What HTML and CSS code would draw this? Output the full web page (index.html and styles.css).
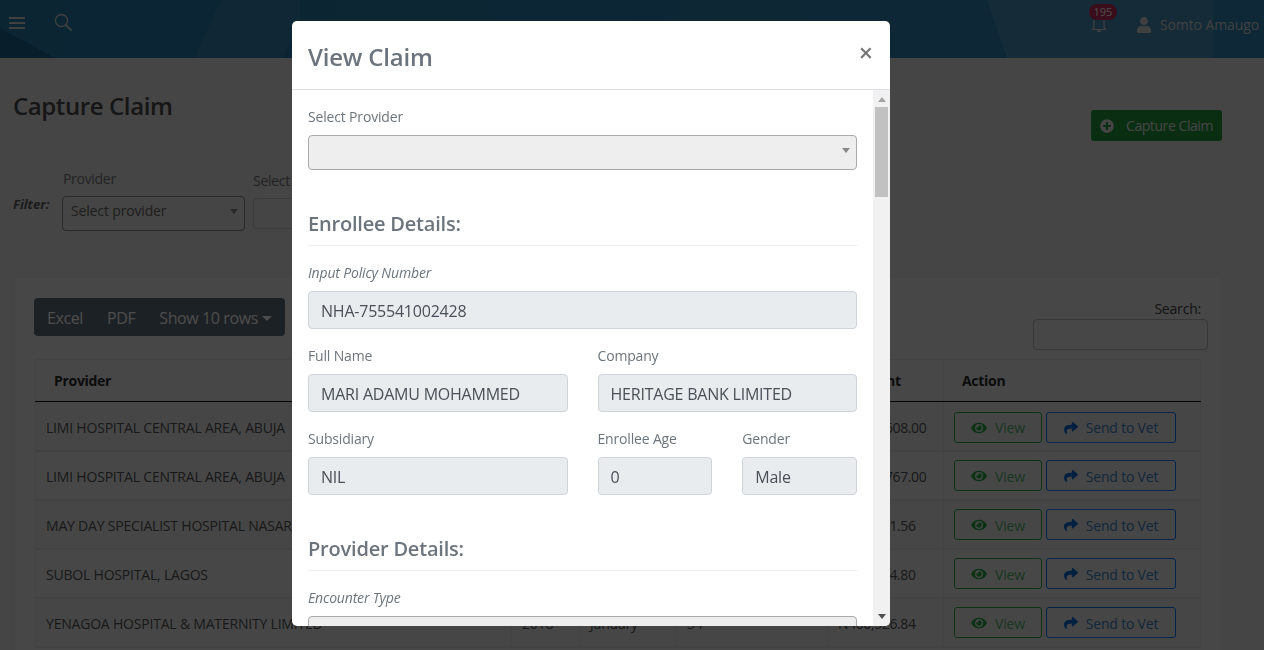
FILE: index.html
```html
<!DOCTYPE html>
<html>
<head>
  <title>Capture Claim</title>
  <link rel="stylesheet" href="styles.css">
</head>
<body>
  <svg class="sprites" aria-hidden="true">
    <symbol id="i-eye" viewBox="0 0 576 512"><path d="M572.52 241.4C518.29 135.59 410.93 64 288 64S57.68 135.64 3.48 241.41a32.35 32.35 0 0 0 0 29.19C57.71 376.41 165.07 448 288 448s230.32-71.64 284.52-177.41a32.35 32.35 0 0 0 0-29.19zM288 400a144 144 0 1 1 144-144 143.93 143.93 0 0 1-144 144zm0-240a95.31 95.31 0 0 0-25.31 3.79 47.85 47.85 0 0 1-66.9 66.9A95.78 95.78 0 1 0 288 160z"/></symbol>
    <symbol id="i-share" viewBox="0 0 512 512"><path d="M503.691 189.836L327.687 37.851C312.281 24.546 288 35.347 288 56.015v80.053C127.371 137.907 0 170.1 0 322.326c0 61.441 39.581 122.309 83.333 154.132 13.653 9.931 33.111-2.533 28.077-18.631C66.066 312.814 132.917 274.316 288 272.085V360c0 20.7 24.3 31.453 39.687 18.164l176.004-152c11.071-9.562 11.086-26.753 0-36.328z"/></symbol>
  </svg>

  <header class="topbar">
    <svg class="menu-icon" width="16" height="12" viewBox="0 0 16 12"><path d="M0 1h16M0 6h16M0 11h16" stroke="currentColor" stroke-width="2"/></svg>
    <svg class="search-icon" width="17" height="17" viewBox="0 0 17 17" fill="none" stroke="currentColor"><circle cx="6.500" cy="6.500" r="6" stroke-width="1.300"/><path d="M10.800 10.800L16.500 16.500" stroke-width="1.800"/></svg>
    <div class="topbar-right">
      <div class="bell">
        <svg width="16" height="17" viewBox="0 0 16 17" fill="none" stroke="currentColor" stroke-width="1.200"><path d="M3 4v6.500c0 1.500-1 2.500-2 3h14c-1-.5-2-1.500-2-3V4"/><path d="M6.500 15h3" stroke-width="2"/></svg>
        <span class="badge">195</span>
      </div>
      <svg class="user-icon" width="14" height="16" viewBox="0 0 448 512" fill="currentColor"><path d="M224 256c70.7 0 128-57.3 128-128S294.7 0 224 0 96 57.3 96 128s57.3 128 128 128zm89.6 32h-16.7c-22.2 10.200-46.9 16-72.9 16s-50.6-5.800-72.9-16h-16.7C60.2 288 0 348.2 0 422.4V464c0 26.500 21.500 48 48 48h352c26.500 0 48-21.500 48-48v-41.6c0-74.2-60.2-134.4-134.4-134.4z"/></svg>
      <span class="user-name">Somto Amaugo</span>
    </div>
  </header>

  <main class="page">
    <div class="page-head">
      <h1>Capture Claim</h1>
      <button class="btn-capture" type="button">
        <svg width="14" height="14" viewBox="0 0 512 512" fill="currentColor"><path d="M256 8C119 8 8 119 8 256s111 248 248 248 248-111 248-248S393 8 256 8zm144 276c0 6.600-5.400 12-12 12h-92v92c0 6.600-5.400 12-12 12h-56c-6.600 0-12-5.400-12-12v-92h-92c-6.600 0-12-5.400-12-12v-56c0-6.600 5.400-12 12-12h92v-92c0-6.600 5.400-12 12-12h56c6.600 0 12 5.400 12 12v92h92c6.600 0 12 5.400 12 12v56z"/></svg>
        Capture Claim
      </button>
    </div>

    <div class="filters">
      <span class="filter-title">Filter:</span>
      <div class="filter-group">
        <label>Provider</label>
        <div class="filter-select">Select provider<i class="caret"></i></div>
      </div>
      <div class="filter-group filter-second">
        <label>Select Year</label>
        <input class="filter-input" type="text">
      </div>
    </div>

    <section class="card">
      <div class="card-tools">
        <div class="export-btns">
          <span>Excel</span>
          <span>PDF</span>
          <span>Show 10 rows<i class="caret-up"></i></span>
        </div>
        <div class="table-search">
          <label>Search:</label>
          <input type="text">
        </div>
      </div>

      <table class="claims">
        <colgroup>
          <col class="c-provider"><col class="c-year"><col class="c-month"><col class="c-count"><col class="c-amount"><col class="c-action">
        </colgroup>
        <thead>
          <tr><th>Provider</th><th>Year</th><th>Month</th><th>Enrollees</th><th>Amount</th><th>Action</th></tr>
        </thead>
        <tbody>
          <tr>
            <td>LIMI HOSPITAL CENTRAL AREA, ABUJA</td><td>2018</td><td>January</td><td>12</td><td class="amt">N1,250,608.00</td>
            <td class="actions"><button class="btn-view"><svg width="16" height="14"><use href="#i-eye"/></svg>View</button><button class="btn-send"><svg width="14" height="14"><use href="#i-share"/></svg>Send to Vet</button></td>
          </tr>
          <tr>
            <td>LIMI HOSPITAL CENTRAL AREA, ABUJA</td><td>2018</td><td>January</td><td>8</td><td class="amt">N1,180,767.00</td>
            <td class="actions"><button class="btn-view"><svg width="16" height="14"><use href="#i-eye"/></svg>View</button><button class="btn-send"><svg width="14" height="14"><use href="#i-share"/></svg>Send to Vet</button></td>
          </tr>
          <tr>
            <td>MAY DAY SPECIALIST HOSPITAL NASARAWA</td><td>2018</td><td>January</td><td>21</td><td class="amt">N198,341.56</td>
            <td class="actions"><button class="btn-view"><svg width="16" height="14"><use href="#i-eye"/></svg>View</button><button class="btn-send"><svg width="14" height="14"><use href="#i-share"/></svg>Send to Vet</button></td>
          </tr>
          <tr>
            <td>SUBOL HOSPITAL, LAGOS</td><td>2018</td><td>January</td><td>17</td><td class="amt">N276,214.80</td>
            <td class="actions"><button class="btn-view"><svg width="16" height="14"><use href="#i-eye"/></svg>View</button><button class="btn-send"><svg width="14" height="14"><use href="#i-share"/></svg>Send to Vet</button></td>
          </tr>
          <tr>
            <td>YENAGOA HOSPITAL &amp; MATERNITY LIMITED</td><td>2018</td><td>January</td><td>34</td><td class="amt">N400,526.84</td>
            <td class="actions"><button class="btn-view"><svg width="16" height="14"><use href="#i-eye"/></svg>View</button><button class="btn-send"><svg width="14" height="14"><use href="#i-share"/></svg>Send to Vet</button></td>
          </tr>
        </tbody>
      </table>
    </section>
  </main>

  <div class="backdrop">
    <div class="modal">
      <div class="modal-head">
        <h2>View Claim</h2>
        <span class="modal-close">&times;</span>
      </div>
      <div class="modal-main">
        <div class="modal-body">
          <div class="field">
            <label>Select Provider</label>
            <div class="select-box"><i class="caret"></i></div>
          </div>

          <h3>Enrollee Details:</h3>
          <div class="form-grid">
            <div class="field span-12">
              <label class="em">Input Policy Number</label>
              <input type="text" readonly value="NHA-755541002428">
            </div>
            <div class="field span-6">
              <label>Full Name</label>
              <input type="text" readonly value="MARI ADAMU MOHAMMED">
            </div>
            <div class="field span-6">
              <label>Company</label>
              <input type="text" readonly value="HERITAGE BANK LIMITED">
            </div>
            <div class="field span-6">
              <label>Subsidiary</label>
              <input type="text" readonly value="NIL">
            </div>
            <div class="field span-3">
              <label>Enrollee Age</label>
              <input type="text" readonly value="0">
            </div>
            <div class="field span-3">
              <label>Gender</label>
              <input type="text" readonly value="Male">
            </div>
          </div>

          <h3>Provider Details:</h3>
          <div class="field">
            <label class="em">Encounter Type</label>
            <div class="select-box"><i class="caret"></i></div>
          </div>
        </div>
        <div class="scrollbar">
          <i class="arrow-up"></i>
          <div class="scroll-thumb"></div>
          <i class="arrow-down"></i>
        </div>
      </div>
    </div>
  </div>
</body>
</html>
```

FILE: styles.css
```css
* {
  box-sizing: border-box;
}
html, body {
  height: 100%;
}
body {
  margin: 0;
  overflow: hidden;
  background-color: #e6e6e6;
  color: #555;
  font-family: "Open Sans", "Noto Sans", sans-serif;
  font-size: 14px;
}
.sprites {
  display: none;
}
.topbar svg, .actions svg, .btn-capture svg {
  flex: none;
}
.topbar {
  height: 58px;
  display: flex;
  align-items: flex-start;
  padding: 0 5px 0 9px;
  color: #d8d8d8;
  background:
    linear-gradient(to top right, #1d6690 50%, transparent 50%) 0 100% / 55px 30px no-repeat,
    linear-gradient(to top right, transparent 50%, #478fb8 50%) 987px 0 / 20px 58px no-repeat,
    linear-gradient(#478fb8, #478fb8) 1007px 0 / 206px 58px no-repeat,
    linear-gradient(115deg, transparent 0, transparent 200px, rgba(255,255,255,.05) 201px, rgba(255,255,255,.05) 280px, transparent 281px) 0 0 / 300px 58px no-repeat,
    linear-gradient(90deg, #2a7cac 0, #2f86b8 100%);
}
.menu-icon {
  margin-top: 17px;
}
.search-icon {
  margin: 14px 0 0 30px;
}
.topbar-right {
  margin-left: auto;
  display: flex;
  align-items: flex-start;
}
.bell {
  position: relative;
  margin-top: 16px;
  color: #d8d8d8;
}
.badge {
  position: absolute;
  left: -2px;
  top: -12px;
  width: 28px;
  height: 16px;
  border-radius: 8px;
  background-color: #c42c5c;
  color: #fff;
  font-size: 11px;
  line-height: 16px;
  text-align: center;
}
.user-icon {
  margin: 17px 0 0 30px;
}
.user-name {
  margin: 15px 0 0 9px;
  font-size: 14px;
  line-height: 20px;
  letter-spacing: -0.1px;
}
.page {
  padding: 0 42px 0 13px;
}
.page-head {
  display: flex;
  justify-content: space-between;
  align-items: flex-start;
  padding-top: 33px;
}
h1 {
  margin: 0;
  font-size: 24px;
  font-weight: 600;
  line-height: 29px;
  color: #4a4a4a;
  letter-spacing: -0.4px;
}
.btn-capture {
  display: flex;
  align-items: center;
  gap: 12px;
  width: 131px;
  height: 31px;
  margin-top: 19px;
  padding: 0 9px;
  border: none;
  border-radius: 3px;
  background-color: #249a3e;
  color: #e8e8e8;
  font: inherit;
  font-size: 14px;
  letter-spacing: -0.43px;
  white-space: nowrap;
}
.filters {
  display: flex;
  align-items: flex-end;
  margin-top: 31px;
  height: 59px;
}
.filter-title {
  width: 49px;
  margin-bottom: 18px;
  font-weight: 700;
  font-style: italic;
  font-size: 13px;
  color: #5d5d5d;
}
.filter-group label {
  display: block;
  margin: 0 0 9px 1px;
  font-size: 14px;
  line-height: 17px;
  letter-spacing: -0.3px;
  color: #777;
}
.filter-select {
  position: relative;
  width: 183px;
  height: 35px;
  padding-left: 8px;
  border: 1px solid #8a8a8a;
  border-radius: 4px;
  font-size: 14px;
  letter-spacing: -0.15px;
  line-height: 27px;
  color: #666;
}
.caret {
  position: absolute;
  right: 6px;
  top: 12px;
  border: 4px solid transparent;
  border-top: 5px solid #888;
  border-bottom: 0;
}
.filter-second {
  margin: 0 0 2px 8px;
  white-space: nowrap;
}
.filter-second label {
  margin-left: 0;
}
.filter-input {
  display: block;
  width: 300px;
  height: 31px;
  border: 1px solid #c8c8c8;
  border-radius: 4px;
  background: transparent;
}
.card {
  margin: 46px 2px 0 1px;
  padding: 20px 20px 0 19px;
  height: 400px;
  background-color: #eeeeee;
  border: 1px solid #e4e4e4;
  border-width: 1px 0 0 1px;
}
.card-tools {
  display: flex;
  justify-content: space-between;
  align-items: flex-start;
  height: 52px;
}
.export-btns {
  display: flex;
  align-items: center;
  gap: 24px;
  height: 38px;
  width: 251px;
  padding: 2px 13px 0;
  border-radius: 4px;
  background-color: #5f6e7c;
  color: #fff;
  font-size: 16px;
  letter-spacing: -0.4px;
  white-space: nowrap;
}
.caret-up {
  display: inline-block;
  margin-left: 4px;
  vertical-align: 3px;
  border: 5px solid transparent;
  border-top-color: #fff;
  border-bottom: 0;
}
.table-search {
  margin-right: -8px;
  text-align: right;
}
.table-search label {
  display: block;
  margin-right: 7px;
  font-size: 14px;
  line-height: 21px;
  color: #444;
  letter-spacing: -0.2px;
}
.table-search input {
  display: block;
  width: 175px;
  height: 31px;
  border: 1px solid #bbb;
  border-radius: 4px;
  background: transparent;
}
.claims {
  margin: 9px 0 0 1px;
  width: 1165px;
  table-layout: fixed;
  border-collapse: collapse;
  font-size: 14px;
  letter-spacing: -0.2px;
}
.c-provider { width: 476px; }
.c-year { width: 68px; }
.c-month { width: 97px; }
.c-count { width: 151px; }
.c-amount { width: 116px; }
.c-action { width: 257px; }
.claims th {
  height: 42px;
  padding: 0 0 0 18px;
  text-align: left;
  font-weight: 700;
  font-size: 14px;
  letter-spacing: -0.3px;
  color: #2a2a2a;
  border: 1px solid #e0e0e0;
  border-bottom: 1px solid #111;
}
.claims td {
  height: 49px;
  padding: 2px 0 0 10px;
  color: #555;
  white-space: nowrap;
  border: 1px solid #e0e0e0;
  border-width: 0 1px 2px;
}
.claims td.actions {
  padding-top: 1px;
}
.claims tbody tr:first-child td {
  padding-top: 4px;
}
.claims tbody tr:first-child td.actions {
  padding-top: 3px;
}
.claims td.amt {
  letter-spacing: -0.4px;
}
.claims tbody tr:nth-child(odd) td {
  background-color: #ebebeb;
}
.actions button {
  display: inline-flex;
  align-items: center;
  justify-content: center;
  gap: 8px;
  height: 31px;
  padding: 1px 0 0;
  background: transparent;
  border-radius: 3px;
  font: inherit;
  font-size: 14px;
  letter-spacing: -0.2px;
  vertical-align: middle;
}
.btn-view {
  width: 88px;
  margin-right: 4px;
  border: 1px solid #28a745;
  color: #55b56e;
}
.btn-view svg {
  fill: #28a745;
}
.btn-send {
  width: 130px;
  border: 1px solid #007bff;
  color: #3b82c4;
}
.btn-send svg {
  fill: #0069d9;
}

/* modal */
.backdrop {
  position: fixed;
  inset: 0;
  background-color: rgba(0, 0, 0, .7);
}
.modal {
  display: flex;
  flex-direction: column;
  width: 598px;
  height: 605px;
  margin: 21px 0 0 292px;
  border-radius: 5px;
  overflow: hidden;
  background-color: #fff;
  color: #6c757d;
}
.modal-head {
  display: flex;
  justify-content: space-between;
  align-items: flex-start;
  flex: none;
  height: 69px;
  padding: 21px 17px 0 16px;
  border-bottom: 1px solid #dee2e6;
}
h2 {
  margin: 0;
  font-size: 24px;
  font-weight: 600;
  line-height: 30px;
  letter-spacing: -0.2px;
}
.modal-close {
  margin-top: -5px;
  font-size: 25px;
  font-weight: 600;
  line-height: 30px;
  color: #777;
}
.modal-main {
  display: flex;
  flex: 1;
  min-height: 0;
}
.modal-body {
  flex: 1;
  min-width: 0;
  overflow: hidden;
  padding: 18px 16px 0;
}
.scrollbar {
  display: flex;
  flex-direction: column;
  align-items: center;
  flex: none;
  width: 17px;
  background-color: #f1f1f1;
}
.arrow-up {
  margin: 7px 0 5px;
  border: 4px solid transparent;
  border-bottom: 5px solid #a3a3a3;
  border-top: 0;
}
.scroll-thumb {
  width: 13px;
  height: 90px;
  background-color: #c1c1c1;
}
.arrow-down {
  margin-top: auto;
  margin-bottom: 7px;
  border: 4px solid transparent;
  border-top: 5px solid #505050;
  border-bottom: 0;
}
.field label {
  display: block;
  margin-bottom: 9px;
  font-size: 14px;
  line-height: 18px;
  letter-spacing: -0.17px;
}
.field label.em {
  font-style: italic;
}
.select-box {
  position: relative;
  height: 35px;
  border: 1px solid #aaa;
  border-radius: 4px;
  background-color: #eee;
}
h3 {
  margin: 40px 0 18px;
  padding: 0 0 8px;
  font-size: 20px;
  font-weight: 600;
  line-height: 27px;
  letter-spacing: -0.2px;
  border-bottom: 1px solid #eee;
}
.form-grid {
  display: grid;
  grid-template-columns: repeat(12, 1fr);
  column-gap: 30px;
  row-gap: 18px;
}
.span-12 { grid-column: span 12; }
.span-6 { grid-column: span 6; }
.span-3 { grid-column: span 3; }
.field input {
  display: block;
  width: 100%;
  height: 38px;
  padding: 2px 12px 0;
  border: 1px solid #ced4da;
  border-radius: 4px;
  background-color: #e9ecef;
  color: #495057;
  font: inherit;
  font-size: 16px;
  letter-spacing: -0.22px;
  outline: none;
}
```
